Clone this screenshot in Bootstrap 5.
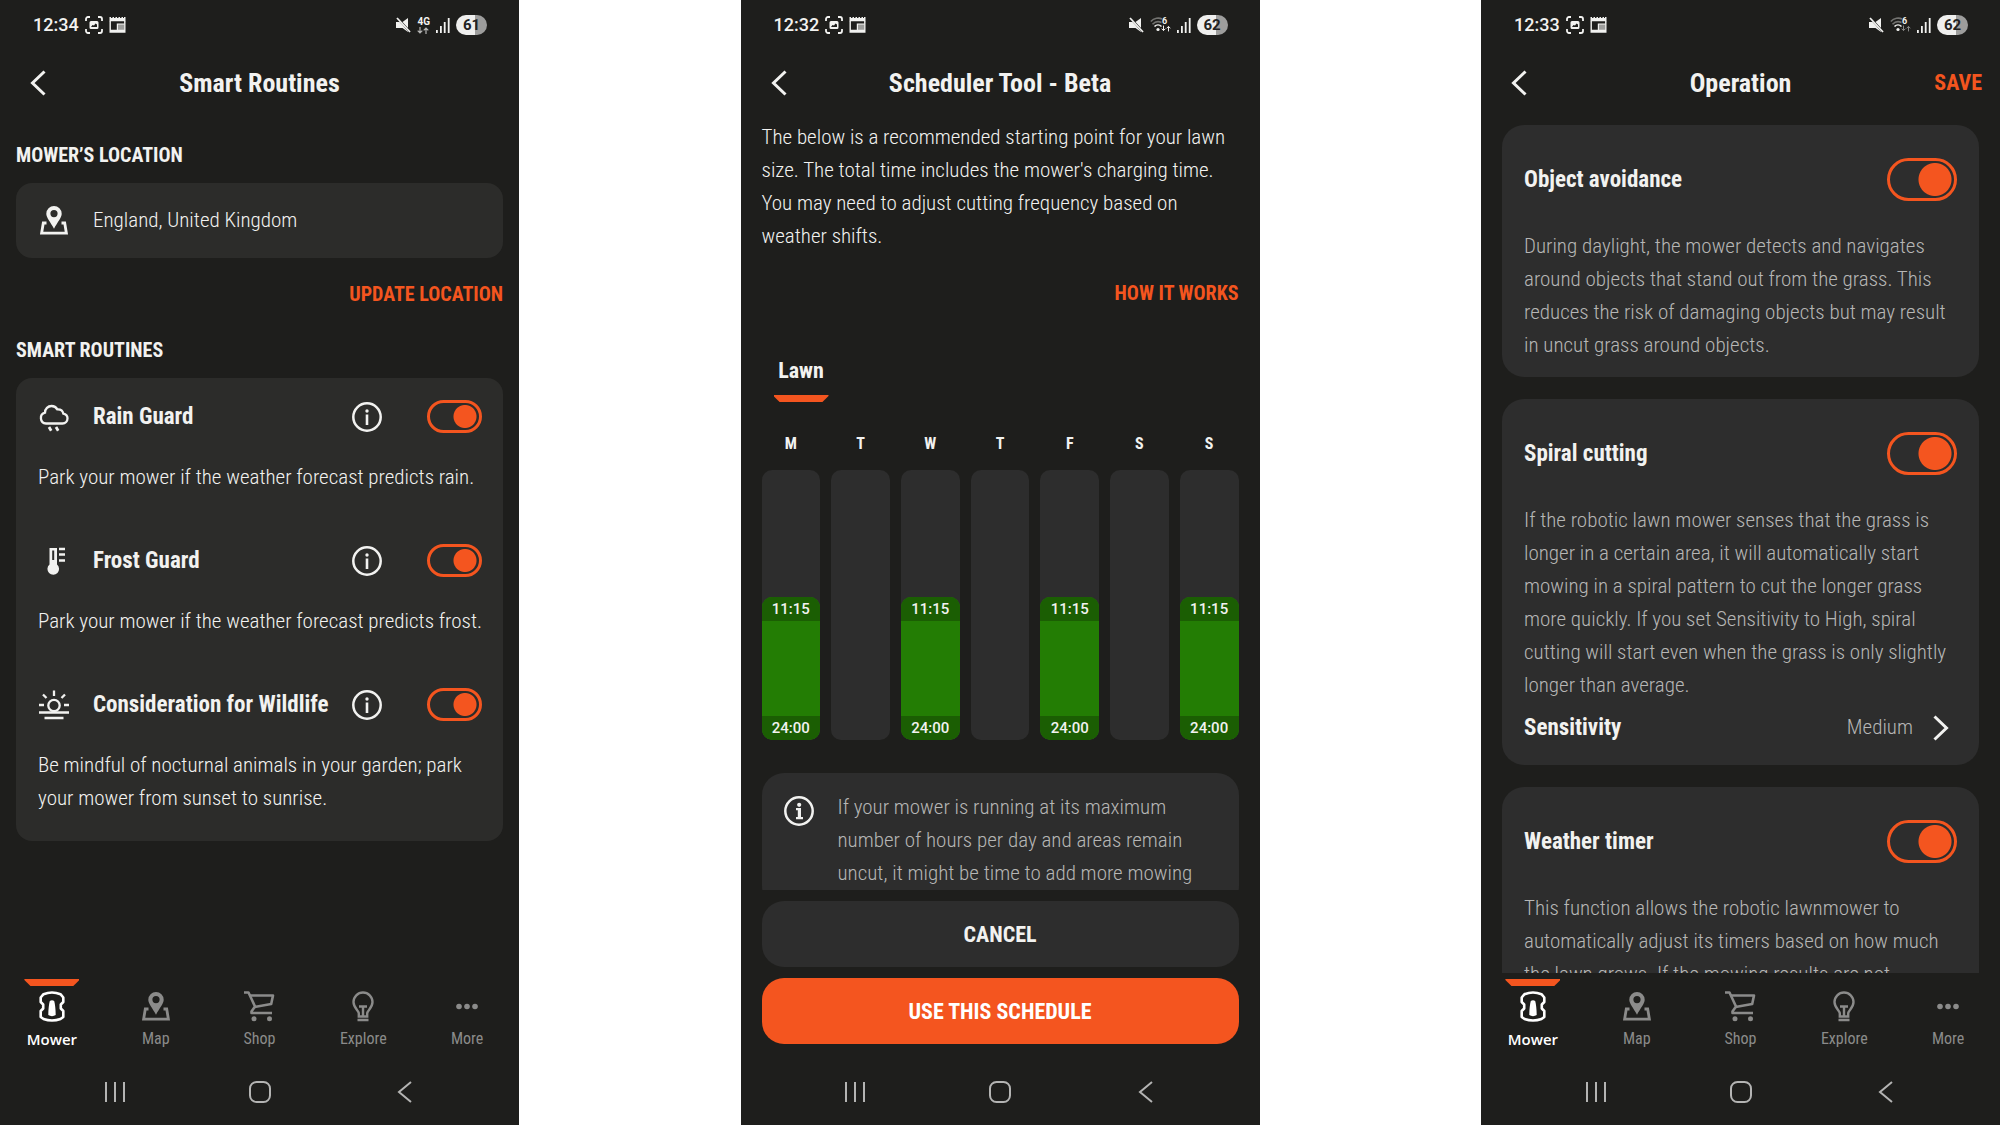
<!DOCTYPE html>
<html lang="en">
<head>
<meta charset="utf-8">
<meta name="viewport" content="width=device-width, initial-scale=1">
<title>Mower app screens</title>
<link href="https://cdn.jsdelivr.net/npm/bootstrap@5.3.0/dist/css/bootstrap.min.css" rel="stylesheet">
<style>
:root{--ink:#f2f2f0;--dim:#b6b6b5;--accent:#f4551f;--screen:#1e1e1c;--panel:#2d2d2d}
body{background:#fff;color:var(--ink);font-family:"Roboto Condensed","Liberation Sans Narrow",Roboto,sans-serif;font-weight:300;font-size:21px;line-height:33px}
svg{display:block;flex:none}
p{margin:0}
button{font:inherit;color:inherit;background:none;border:0;padding:0}
a{color:inherit;text-decoration:none}
.phone{width:25.95%;height:100vh;background:var(--screen);overflow:hidden}
.phone>*{flex-shrink:0}
.phone>main{flex:1 1 0;min-height:0;overflow:hidden}
.statusbar{height:50px;padding:0 32px 0 33px;font:500 18px/24px Roboto,sans-serif}
.status-left,.status-right{gap:6px}
.net-label{font:700 10px/10px Roboto,sans-serif}
.battery{width:31px;height:20px;border-radius:10px;font:700 15px/20px Roboto,sans-serif;color:#222;background:linear-gradient(90deg,#efefee 61%,#9d9d9c 61%)}
.appbar{height:66px;display:grid;grid-template-columns:1fr auto 1fr;align-items:center;padding:0 18px}
.appbar .go-back{padding-left:12px}
.appbar h1{font-size:26px;line-height:33px;font-weight:700;margin:0}
.caps{font-size:20px;line-height:24px;font-weight:700;margin:0}
.caps-lg{font-size:22px}
.accent{color:var(--accent)}
.panel{background:var(--panel);border-radius:22px}
.panel-sm{border-radius:16px;background:#2c2c2a}
.item-title{font-size:23px;line-height:33px;font-weight:700;margin:0}
.s1{padding:27px 16px 0}
.place{padding:21px 22px;gap:23px}
.section-gap{margin-top:32px}
.routines{padding:22px 0 26px 22px}
.routine{padding-right:10px}
.routine+.routine{margin-top:50px}
.routine-head{height:33px;margin:0 11px 28px 0}
.routine-name{gap:23px}
.routine-tools{gap:45px}
.form-check-input.toggle{float:none;margin:0;width:55px;height:33px;border:3px solid var(--accent);border-radius:22px;background:radial-gradient(circle at 35px 50%,var(--accent) 11px,transparent 12px);box-shadow:none;flex:none}
.form-check-input.toggle.toggle-lg{width:70px;height:43px;background:radial-gradient(circle at 45px 50%,var(--accent) 16px,transparent 17px)}
.s2{padding:5px 21px 0}
.how{margin-top:28px}
.tab-strip{width:55px;height:7px;background:var(--accent);clip-path:polygon(0 0,100% 0,100% 15%,89% 100%,11% 100%,0 15%)}
.lawn-tab{margin:54px 0 32px 12px;width:55px}
.lawn-tab .caps{margin-bottom:12px}
.week{display:grid;grid-template-columns:repeat(7,1fr);gap:16px 11px;margin-bottom:33px}
.day{font-weight:700;font-size:16px;line-height:20px;text-align:center}
.lane{height:270px;border-radius:10px;background:var(--panel);overflow:hidden}
.slot{background:#237d04;border-radius:10px;overflow:hidden;font:500 15px/24px Roboto,sans-serif;text-align:center}
.slot span{background:#1b5e03;height:24px}
.tip{padding:18px 22px;gap:24px;color:var(--dim)}
.tip svg{margin-top:5px;color:var(--ink)}
.actions{padding:11px 21px 15px;gap:11px}
.actions .btn{height:66px;border-radius:22px;font-size:22px;font-weight:700;border:0;color:var(--ink);background:var(--panel)}
.actions .btn-go{background:var(--accent);color:#fff}
.s3{padding:9px 21px 0;gap:22px}
.setting{padding:33px 22px 15px}
.setting-head{margin-bottom:29px}
.sens{margin:9px 8px 6px 0}
.dim{color:var(--dim)}
.tabs{height:86px;padding-top:6px}
.tabs a{flex:1 1 0;color:#8b8b8a;font-weight:400;font-size:16px;line-height:20px;padding-top:12px}
.tabs svg{margin-bottom:7px}
.tabs a.on{color:#fff;font:600 15px/20px "Open Sans",sans-serif;padding-top:0}
.tabs .tab-strip{margin-bottom:5px}
.sysnav{height:66px;padding:0 42px;color:#b4b4b3}
.sysnav button{flex:1 1 0}
</style>
<script src="https://cdn.jsdelivr.net/npm/bootstrap@5.3.0/dist/js/bootstrap.bundle.min.js"></script>
</head>
<body class="d-flex justify-content-between">

<svg width="0" height="0" class="position-absolute" aria-hidden="true">
  <symbol id="i-shot" viewBox="0 0 18 18"><path d="M1 5V3a2 2 0 0 1 2-2h2M13 1h2a2 2 0 0 1 2 2v2M17 13v2a2 2 0 0 1-2 2h-2M5 17H3a2 2 0 0 1-2-2v-2" fill="none" stroke="currentColor" stroke-width="1.800"/><path fill="currentColor" fill-rule="evenodd" d="M6 5h6a1.500 1.500 0 0 1 1.500 1.500v5A1.500 1.500 0 0 1 12 13H6a1.500 1.500 0 0 1-1.500-1.500v-5A1.500 1.500 0 0 1 6 5zm0 6h6V8.500L10.500 7.500 9 9.500 7.500 9z"/></symbol>
  <symbol id="i-news" viewBox="0 0 17 16"><path fill="currentColor" d="M.5 0H2v1h1.500V0H5v1h1.500V0H8v1h1.500V0H11v1h1.500V0H14v1h1V0h1.500v4.200H.5z"/><path d="M1.200 4v11h14.600V4" fill="none" stroke="currentColor" stroke-width="1.400"/><path fill="currentColor" opacity=".6" d="M9 7.500h6V14H9z"/><path fill="currentColor" d="M1 12.800h15V15H1zM7.800 6.500H9V14H7.800zM8 6.500h7.500v1.200H8z"/></symbol>
  <symbol id="i-mute" viewBox="0 0 15 16"><path fill="currentColor" d="M0 5h3.500L6 7.500 12 14.500V15L6.500 11H0zM6.500 5 12 1v10z"/><path d="M1 1 14 15" stroke="currentColor" stroke-width="1.800"/></symbol>
  <symbol id="i-bars" viewBox="0 0 14 15"><path fill="currentColor" d="M0 12h1.800v3H0zM4 8h1.800v7H4zM7.800 4h1.800v11H7.800zM11.800 0h1.800v15h-1.800z"/></symbol>
  <symbol id="i-data" viewBox="0 0 12 7"><path d="M3 0v6M.7 3.700 3 6l2.300-2.300M9 7V1M6.700 3.300 9 1l2.300 2.300" fill="none" stroke="currentColor" stroke-width="1.200"/></symbol>
  <symbol id="i-wifi" viewBox="0 0 21 16"><g fill="none" stroke="currentColor" stroke-width="1.600"><path opacity=".4" d="M.8 4.500C4 1 9 .4 12 2M2.500 7.200C5 4.700 8.500 4 11.500 5.500"/><path d="M4.500 9.500c2-2 5-2 7 0"/></g><circle cx="8" cy="12.500" r="1.600" fill="currentColor"/><text x="12" y="7" font-family="Roboto,sans-serif" font-weight="700" font-size="9" fill="currentColor">6</text></symbol>
  <symbol id="i-back" viewBox="0 0 16 26"><path d="M14.500 1.500 2.500 13l12 11.500" fill="none" stroke="currentColor" stroke-width="3"/></symbol>
  <symbol id="i-map" viewBox="0 0 28 29"><path d="M6.500 17H3.300L1.600 27.200h24.800L24.700 17h-3.200" fill="none" stroke="currentColor" stroke-width="2.800"/><path fill="currentColor" fill-rule="evenodd" d="M14 0a7.700 7.700 0 0 1 7.700 7.700c0 4-4.200 8.300-7.700 15-3.500-6.700-7.700-11-7.700-15A7.700 7.700 0 0 1 14 0zm0 4a3.600 3.600 0 1 0 0 7.200A3.600 3.600 0 0 0 14 4z"/></symbol>
  <symbol id="i-rain" viewBox="0 0 32 32"><path d="M8 22.500a5.500 5.500 0 0 1-1-10.800c0-4 3-6.700 6.500-6.700 2.700 0 4.700 1.300 5.800 3.400 3.400-.2 5.500 1.600 6 4.200 2.700.5 4.200 2.300 4.200 4.700 0 2.900-2.100 5.200-5 5.200z" fill="none" stroke="currentColor" stroke-width="2.300"/><path d="m11 26 2.200 3.700M18 26l2.200 3.700" stroke="currentColor" stroke-width="2.800"/></symbol>
  <symbol id="i-frost" viewBox="0 0 32 32"><path fill="currentColor" fill-rule="evenodd" d="M11.500 3H19v16.500a5.800 5.800 0 1 1-7.500 0zm2.700 2.500V15h2V5.500z"/><path d="M21 4h6M21 9.500h6M21 15.500h6" stroke="currentColor" stroke-width="2.400"/></symbol>
  <symbol id="i-sun" viewBox="0 0 32 32"><g fill="none" stroke="currentColor" stroke-width="2.300"><circle cx="16" cy="16.500" r="5.700"/><path d="M16 1.500v5.500M5 5.500l3.500 3.500M27 5.500 23.500 9M1 16h5M26 16h5M1 23.500h30M6.500 29h19"/></g></symbol>
  <symbol id="i-info" viewBox="0 0 30 30"><circle cx="15" cy="15" r="13.700" fill="none" stroke="currentColor" stroke-width="2.500"/><path fill="currentColor" d="M13.700 12.500h2.600V23h-2.600z"/><circle cx="15" cy="9" r="1.700" fill="currentColor"/></symbol>
  <symbol id="i-info2" viewBox="0 0 30 30"><circle cx="15" cy="15" r="13.700" fill="none" stroke="currentColor" stroke-width="2.500"/><path fill="currentColor" d="M12 12h5v9h2v2.300h-7V21h1.800v-6.700H12z"/><circle cx="15.200" cy="8.800" r="2.100" fill="currentColor"/></symbol>
  <symbol id="i-mower" viewBox="0 0 26 31"><path d="M1.700 6.500 4.500 3.200C9.500 1.200 16.500 1.200 21.500 3.200l2.800 3.300V11l-2.500 2.500v4L24.300 20v6l-2.800 2c-5 1.800-12 1.800-17 0l-2.800-2v-6l2.500-2.500v-4L1.700 11z" fill="none" stroke="currentColor" stroke-width="2.600" stroke-linejoin="round"/><path fill="currentColor" d="M10.800 10q2.200-1.500 4.400 0c.8 3 1.500 8 1.500 14-2 1.500-5.400 1.500-7.400 0 0-6 .7-11 1.500-14z"/></symbol>
  <symbol id="i-cart" viewBox="0 0 31 31"><g fill="none" stroke="currentColor" stroke-width="2.600" stroke-linejoin="round"><path d="M0 1.500h4.500L11 15.500 7.500 20.500V22H28"/><path d="M6 4.500h23l-1.800 8.500L10.500 16"/></g><circle cx="10" cy="27.800" r="2.500" fill="currentColor"/><circle cx="25.500" cy="27.800" r="2.500" fill="currentColor"/></symbol>
  <symbol id="i-bulb" viewBox="0 0 22 31"><g fill="none" stroke="currentColor" stroke-width="2.400"><path d="M6.800 25.500v-3c0-3-5.300-5.500-5.300-11.500a9.500 9.500 0 0 1 19 0c0 6-5.300 8.500-5.300 11.500v3z"/><path d="M7 15.500h8M11 15.500V25M5.500 29h11"/></g></symbol>
  <symbol id="i-dots" viewBox="0 0 22 31"><g fill="currentColor"><circle cx="3" cy="15.500" r="2.800"/><circle cx="11" cy="15.500" r="2.800"/><circle cx="19" cy="15.500" r="2.800"/></g></symbol>
  <symbol id="i-recent" viewBox="0 0 22 22"><path d="M2 1v20M11 1v20M20 1v20" stroke="currentColor" stroke-width="2"/></symbol>
  <symbol id="i-home" viewBox="0 0 22 22"><rect x="1" y="1" width="20" height="20" rx="6.500" fill="none" stroke="currentColor" stroke-width="2"/></symbol>
  <symbol id="i-sysback" viewBox="0 0 15 22"><path d="M14 1 2 11l12 10" fill="none" stroke="currentColor" stroke-width="2"/></symbol>
</svg>

<section class="phone d-flex flex-column">
  <div class="statusbar d-flex align-items-center justify-content-between">
    <div class="status-left d-flex align-items-center"><span>12:34</span><svg width="18" height="18"><use href="#i-shot"/></svg><svg width="17" height="16"><use href="#i-news"/></svg></div>
    <div class="status-right d-flex align-items-center"><svg width="15" height="16"><use href="#i-mute"/></svg><span class="net-label"><span class="d-block">4G</span><svg class="dim" width="12" height="7"><use href="#i-data"/></svg></span><svg width="14" height="15"><use href="#i-bars"/></svg><span class="battery text-center">61</span></div>
  </div>
  <header class="appbar"><button type="button" class="go-back" aria-label="Back"><svg width="16" height="26"><use href="#i-back"/></svg></button><h1>Smart Routines</h1></header>
  <main class="s1">
    <h2 class="caps mb-3">MOWER’S LOCATION</h2>
    <div class="panel panel-sm place d-flex align-items-center"><svg width="32" height="29"><use href="#i-map"/></svg><span>England, United Kingdom</span></div>
    <div class="mt-4 d-flex justify-content-end"><button type="button" class="caps accent">UPDATE LOCATION</button></div>
    <h2 class="caps section-gap mb-3">SMART ROUTINES</h2>
    <div class="panel panel-sm routines">
      <div class="routine">
        <div class="routine-head d-flex align-items-center justify-content-between">
          <label for="rain" class="routine-name d-flex align-items-center item-title"><svg width="32" height="32"><use href="#i-rain"/></svg>Rain Guard</label>
          <div class="routine-tools d-flex align-items-center"><button type="button" aria-label="About Rain Guard"><svg width="30" height="30"><use href="#i-info"/></svg></button><input id="rain" class="form-check-input toggle" type="checkbox" role="switch" checked></div>
        </div>
        <p>Park your mower if the weather forecast predicts rain.</p>
      </div>
      <div class="routine">
        <div class="routine-head d-flex align-items-center justify-content-between">
          <label for="frost" class="routine-name d-flex align-items-center item-title"><svg width="32" height="32"><use href="#i-frost"/></svg>Frost Guard</label>
          <div class="routine-tools d-flex align-items-center"><button type="button" aria-label="About Frost Guard"><svg width="30" height="30"><use href="#i-info"/></svg></button><input id="frost" class="form-check-input toggle" type="checkbox" role="switch" checked></div>
        </div>
        <p>Park your mower if the weather forecast predicts frost.</p>
      </div>
      <div class="routine">
        <div class="routine-head d-flex align-items-center justify-content-between">
          <label for="wild" class="routine-name d-flex align-items-center item-title"><svg width="32" height="32"><use href="#i-sun"/></svg>Consideration for Wildlife</label>
          <div class="routine-tools d-flex align-items-center"><button type="button" aria-label="About Consideration for Wildlife"><svg width="30" height="30"><use href="#i-info"/></svg></button><input id="wild" class="form-check-input toggle" type="checkbox" role="switch" checked></div>
        </div>
        <p>Be mindful of nocturnal animals in your garden; park your mower from sunset to sunrise.</p>
      </div>
    </div>
  </main>
  <nav class="tabs d-flex text-center">
    <a href="#" class="on d-flex flex-column align-items-center"><span class="tab-strip"></span><svg width="26" height="31"><use href="#i-mower"/></svg>Mower</a>
    <a href="#" class="d-flex flex-column align-items-center"><svg width="28" height="31"><use href="#i-map"/></svg>Map</a>
    <a href="#" class="d-flex flex-column align-items-center"><svg width="31" height="31"><use href="#i-cart"/></svg>Shop</a>
    <a href="#" class="d-flex flex-column align-items-center"><svg width="22" height="31"><use href="#i-bulb"/></svg>Explore</a>
    <a href="#" class="d-flex flex-column align-items-center"><svg width="22" height="31"><use href="#i-dots"/></svg>More</a>
  </nav>
  <div class="sysnav d-flex align-items-center"><button type="button" aria-label="Recent apps"><svg class="mx-auto" width="22" height="22"><use href="#i-recent"/></svg></button><button type="button" aria-label="Home"><svg class="mx-auto" width="22" height="22"><use href="#i-home"/></svg></button><button type="button" aria-label="System back"><svg class="mx-auto" width="15" height="22"><use href="#i-sysback"/></svg></button></div>
</section>

<section class="phone d-flex flex-column">
  <div class="statusbar d-flex align-items-center justify-content-between">
    <div class="status-left d-flex align-items-center"><span>12:32</span><svg width="18" height="18"><use href="#i-shot"/></svg><svg width="17" height="16"><use href="#i-news"/></svg></div>
    <div class="status-right d-flex align-items-center"><svg width="15" height="16"><use href="#i-mute"/></svg><svg width="21" height="16"><use href="#i-wifi"/><use href="#i-data" x="11" y="8" width="10" height="7"/></svg><svg width="14" height="15"><use href="#i-bars"/></svg><span class="battery text-center">62</span></div>
  </div>
  <header class="appbar"><button type="button" class="go-back" aria-label="Back"><svg width="16" height="26"><use href="#i-back"/></svg></button><h1>Scheduler Tool - Beta</h1></header>
  <main class="s2">
    <p>The below is a recommended starting point for your lawn size. The total time includes the mower's charging time. You may need to adjust cutting frequency based on weather shifts.</p>
    <div class="how d-flex justify-content-end"><button type="button" class="caps accent">HOW IT WORKS</button></div>
    <div class="lawn-tab"><h2 class="caps caps-lg text-center">Lawn</h2><div class="tab-strip"></div></div>
    <div class="week">
      <div class="day">M</div><div class="day">T</div><div class="day">W</div><div class="day">T</div><div class="day">F</div><div class="day">S</div><div class="day">S</div>
      <div class="lane d-flex flex-column justify-content-end"><div class="slot d-flex flex-column justify-content-between" style="height:53.125%"><span>11:15</span><span>24:00</span></div></div>
      <div class="lane"></div>
      <div class="lane d-flex flex-column justify-content-end"><div class="slot d-flex flex-column justify-content-between" style="height:53.125%"><span>11:15</span><span>24:00</span></div></div>
      <div class="lane"></div>
      <div class="lane d-flex flex-column justify-content-end"><div class="slot d-flex flex-column justify-content-between" style="height:53.125%"><span>11:15</span><span>24:00</span></div></div>
      <div class="lane"></div>
      <div class="lane d-flex flex-column justify-content-end"><div class="slot d-flex flex-column justify-content-between" style="height:53.125%"><span>11:15</span><span>24:00</span></div></div>
    </div>
    <div class="panel tip d-flex align-items-start"><svg width="30" height="30"><use href="#i-info2"/></svg><p>If your mower is running at its maximum number of hours per day and areas remain uncut, it might be time to add more mowing</p></div>
  </main>
  <div class="actions d-flex flex-column"><button type="button" class="btn">CANCEL</button><button type="button" class="btn btn-go">USE THIS SCHEDULE</button></div>
  <div class="sysnav d-flex align-items-center"><button type="button" aria-label="Recent apps"><svg class="mx-auto" width="22" height="22"><use href="#i-recent"/></svg></button><button type="button" aria-label="Home"><svg class="mx-auto" width="22" height="22"><use href="#i-home"/></svg></button><button type="button" aria-label="System back"><svg class="mx-auto" width="15" height="22"><use href="#i-sysback"/></svg></button></div>
</section>

<section class="phone d-flex flex-column">
  <div class="statusbar d-flex align-items-center justify-content-between">
    <div class="status-left d-flex align-items-center"><span>12:33</span><svg width="18" height="18"><use href="#i-shot"/></svg><svg width="17" height="16"><use href="#i-news"/></svg></div>
    <div class="status-right d-flex align-items-center"><svg width="15" height="16"><use href="#i-mute"/></svg><svg width="21" height="16"><use href="#i-wifi"/><use href="#i-data" x="11" y="8" width="10" height="7" opacity=".5"/></svg><svg width="14" height="15"><use href="#i-bars"/></svg><span class="battery text-center">62</span></div>
  </div>
  <header class="appbar"><button type="button" class="go-back" aria-label="Back"><svg width="16" height="26"><use href="#i-back"/></svg></button><h1>Operation</h1><button type="button" class="caps caps-lg accent text-end">SAVE</button></header>
  <main class="s3 d-flex flex-column">
    <div class="panel setting flex-shrink-0">
      <div class="setting-head d-flex align-items-center justify-content-between"><label for="obj" class="item-title">Object avoidance</label><input id="obj" class="form-check-input toggle toggle-lg" type="checkbox" role="switch" checked></div>
      <p class="dim">During daylight, the mower detects and navigates around objects that stand out from the grass. This reduces the risk of damaging objects but may result in uncut grass around objects.</p>
    </div>
    <div class="panel setting flex-shrink-0">
      <div class="setting-head d-flex align-items-center justify-content-between"><label for="spiral" class="item-title">Spiral cutting</label><input id="spiral" class="form-check-input toggle toggle-lg" type="checkbox" role="switch" checked></div>
      <p class="dim">If the robotic lawn mower senses that the grass is longer in a certain area, it will automatically start mowing in a spiral pattern to cut the longer grass more quickly. If you set Sensitivity to High, spiral cutting will start even when the grass is only slightly longer than average.</p>
      <a href="#" class="sens d-flex align-items-center"><span class="item-title me-auto">Sensitivity</span><span class="dim me-3">Medium</span><svg width="20" height="26"><use href="#i-back" width="16" height="26" transform="rotate(180 10 13)"/></svg></a>
    </div>
    <div class="panel setting flex-shrink-0">
      <div class="setting-head d-flex align-items-center justify-content-between"><label for="weather" class="item-title">Weather timer</label><input id="weather" class="form-check-input toggle toggle-lg" type="checkbox" role="switch" checked></div>
      <p class="dim">This function allows the robotic lawnmower to automatically adjust its timers based on how much the lawn grows. If the mowing results are not</p>
    </div>
  </main>
  <nav class="tabs d-flex text-center">
    <a href="#" class="on d-flex flex-column align-items-center"><span class="tab-strip"></span><svg width="26" height="31"><use href="#i-mower"/></svg>Mower</a>
    <a href="#" class="d-flex flex-column align-items-center"><svg width="28" height="31"><use href="#i-map"/></svg>Map</a>
    <a href="#" class="d-flex flex-column align-items-center"><svg width="31" height="31"><use href="#i-cart"/></svg>Shop</a>
    <a href="#" class="d-flex flex-column align-items-center"><svg width="22" height="31"><use href="#i-bulb"/></svg>Explore</a>
    <a href="#" class="d-flex flex-column align-items-center"><svg width="22" height="31"><use href="#i-dots"/></svg>More</a>
  </nav>
  <div class="sysnav d-flex align-items-center"><button type="button" aria-label="Recent apps"><svg class="mx-auto" width="22" height="22"><use href="#i-recent"/></svg></button><button type="button" aria-label="Home"><svg class="mx-auto" width="22" height="22"><use href="#i-home"/></svg></button><button type="button" aria-label="System back"><svg class="mx-auto" width="15" height="22"><use href="#i-sysback"/></svg></button></div>
</section>
</body>
</html>
